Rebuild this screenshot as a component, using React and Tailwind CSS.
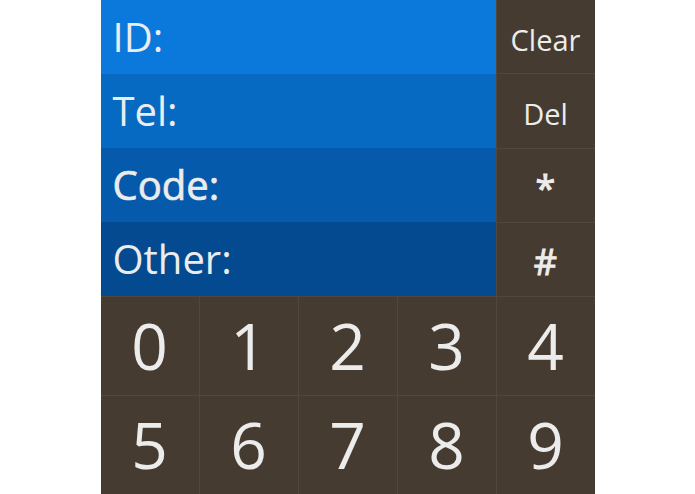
import React from 'react';

const fields = [
  { label: 'ID:', bg: 'bg-[#0a79db]', bold: false },
  { label: 'Tel:', bg: 'bg-[#0669c2]', bold: false },
  { label: 'Code:', bg: 'bg-[#055aab]', bold: true },
  { label: 'Other:', bg: 'bg-[#044a90]', bold: false },
];

const sideKeys = ['Clear', 'Del', '*', '#'];
const digits = ['0', '1', '2', '3', '4', '5', '6', '7', '8', '9'];

export default function App() {
  return (
    <div className="w-[494px] h-[494px] mx-auto bg-[#51473d] text-[#ececec]" style={{ fontFamily: '"Open Sans", sans-serif' }}>
      <div className="flex gap-px h-[296px]">
        <div className="w-[395px] flex flex-col">
          {fields.map((f) => (
            <div key={f.label} className={`${f.bg} h-[74px] flex items-center pl-[12px] text-[40px] ${f.bold ? '[-webkit-text-stroke:0.7px_#ececec]' : ''}`}>
              {f.label}
            </div>
          ))}
        </div>
        <div className="flex-1 flex flex-col gap-px">
          {sideKeys.map((k) => (
            <button key={k} className={`flex-1 bg-[#453b31] flex items-center justify-center pt-[6px] ${k.length > 1 ? 'text-[29px]' : 'text-[36px] [-webkit-text-stroke:1px_#ececec]'}`}>
              {k}
            </button>
          ))}
        </div>
      </div>
      <div className="grid grid-cols-5 gap-px pt-px">
        {digits.map((d) => (
          <button key={d} className="h-[98px] bg-[#453b31] flex items-center justify-center text-[64px]">
            {d}
          </button>
        ))}
      </div>
    </div>
  );
}
